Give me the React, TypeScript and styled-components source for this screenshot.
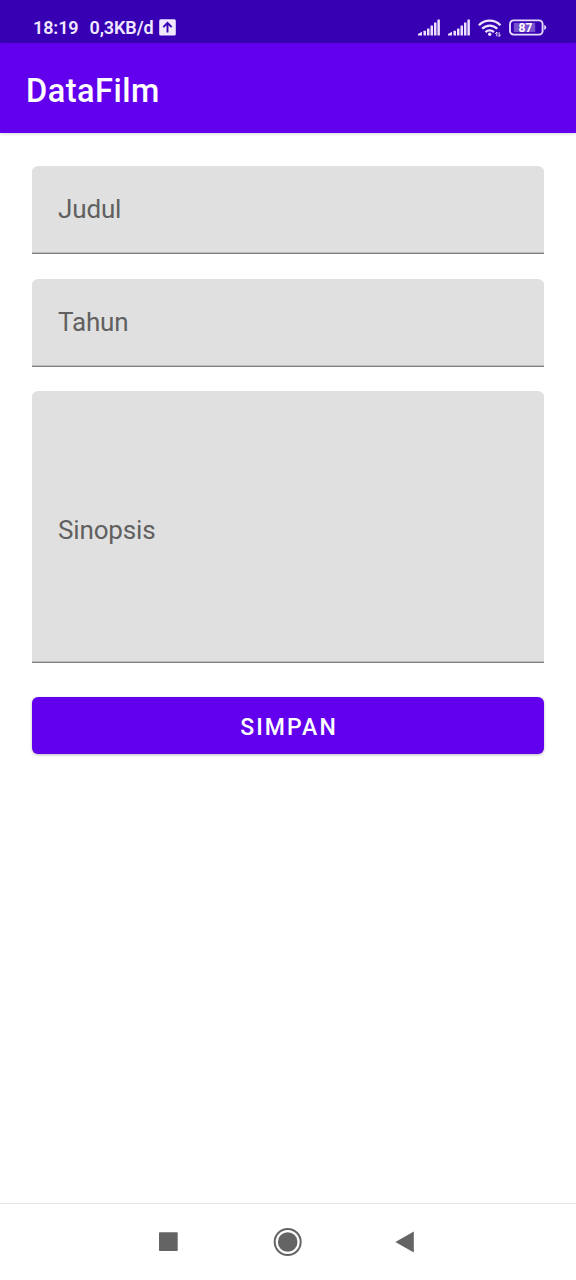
import React from "react";
import styled, { createGlobalStyle } from "styled-components";

const GlobalStyle = createGlobalStyle`
  * { box-sizing: border-box; }
  body { margin: 0; background: #fff; font-family: Roboto, "Liberation Sans", sans-serif; }
`;

const Screen = styled.div`
  display: flex;
  flex-direction: column;
  width: 576px;
  height: 1280px;
  overflow: hidden;
  background: #fff;
`;

const StatusBar = styled.header`
  display: flex;
  align-items: center;
  justify-content: space-between;
  height: 43px;
  flex: none;
  padding: 12px 29px 0 33px;
  background: #3700b3;
  color: #f0e8ff;
`;

const StatusGroup = styled.div<{ $gap: number }>`
  display: flex;
  align-items: center;
  gap: ${(p) => p.$gap}px;
`;

const StatusText = styled.span<{ $after: number }>`
  margin-right: ${(p) => p.$after}px;
  font-size: 18px;
  font-weight: 600;
  line-height: 20px;
  letter-spacing: -0.1px;
  white-space: nowrap;
`;

const AppBar = styled.div`
  display: flex;
  align-items: center;
  height: 90px;
  flex: none;
  padding: 6px 26px 0;
  background: #6200ee;
  box-shadow: 0 1px 3px rgba(0, 0, 0, 0.16);
`;

const Title = styled.h1`
  margin: 0;
  color: #fff;
  font-size: 32.5px;
  font-weight: 500;
  line-height: 40px;
  letter-spacing: 0.5px;
`;

const Form = styled.main`
  flex: 1;
  display: flex;
  flex-direction: column;
  padding: 33px 32px 0;
`;

const Field = styled.div<{ $height: number; $gap: number; $shift?: number }>`
  display: flex;
  align-items: flex-start;
  flex: none;
  height: ${(p) => p.$height}px;
  margin-bottom: ${(p) => p.$gap}px;
  padding: ${(p) => p.$shift ?? 27}px 26px 0;
  background: #e0e0e0;
  border-bottom: 1px solid #808080;
  border-radius: 6px 6px 0 0;
  box-shadow: inset 0 -1px 0 #bcbcbc;
`;

const Label = styled.span`
  color: #606060;
  font-size: 26px;
  line-height: 32px;
  letter-spacing: -0.15px;
`;

const SaveButton = styled.button`
  height: 57px;
  margin: 0;
  padding: 3px 0 0 2px;
  border: 0;
  border-radius: 6px;
  background: #6200ee;
  box-shadow: 0 1px 3px rgba(0, 0, 0, 0.28);
  color: #fff;
  font-family: inherit;
  font-size: 23px;
  font-weight: 500;
  letter-spacing: 2.1px;
`;

const NavBar = styled.nav`
  display: flex;
  align-items: center;
  height: 77px;
  flex: none;
  padding-left: 158px;
  border-top: 1px solid #e4e4e4;
`;

const NavIcon = styled.svg<{ $gap?: number }>`
  display: block;
  margin-left: ${(p) => p.$gap ?? 0}px;
  fill: #646464;
`;

const UploadIcon = () => (
  <svg width="17" height="17" viewBox="0 0 17 17">
    <rect x="0.2" y="0.2" width="16.6" height="16.4" rx="1.5" fill="#f0e8ff" />
    <path d="M8.5 13.4V4.2M4.3 8.2l4.2-4.3 4.2 4.3" fill="none" stroke="#3700b3" strokeWidth="1.9" />
  </svg>
);

const SignalIcon = () => (
  <svg width="23" height="17" viewBox="0 0 23 17" fill="#ebe1fd">
    <path d="M0 16.4V15l4-2.2v3.6z" />
    <rect x="5.5" y="11.8" width="2.5" height="4.6" rx="0.5" />
    <rect x="9" y="9.6" width="2.5" height="6.8" rx="0.5" />
    <rect x="12.5" y="6.6" width="2.5" height="9.8" rx="0.5" />
    <rect x="16" y="3.6" width="2.5" height="12.8" rx="0.5" />
    <rect x="19.4" y="0.4" width="2.5" height="16" rx="0.5" />
  </svg>
);

const WifiIcon = () => (
  <svg width="24" height="19" viewBox="0 0 24 19" fill="none" stroke="#ede4fe" strokeWidth="2.3">
    <path d="M0.9 7.3a15 15 0 0 1 21.6 0" />
    <path d="M4.2 10.8a10.4 10.4 0 0 1 15 0" />
    <path d="M7.5 14.1a6 6 0 0 1 8.4 0" />
    <circle cx="11.7" cy="16.2" r="1.7" fill="#ede4fe" stroke="none" />
    <path d="M18.9 18.4v-4.4l-1.6 2M21.1 14.2v4.4l1.6-2" strokeWidth="1" />
  </svg>
);

const BatteryIcon = () => (
  <svg width="38" height="17" viewBox="0 0 38 17">
    <rect x="1" y="1.4" width="32.6" height="14.2" rx="3.6" fill="none" stroke="#e6dbfb" strokeWidth="1.9" />
    <rect x="4.8" y="3.9" width="21.4" height="9.2" fill="#7650cd" />
    <path d="M35.2 6.1q2 .4 2 2.4t-2 2.4z" fill="#e6dbfb" />
    <text x="16.4" y="12.7" textAnchor="middle" fill="#fff" fontFamily="Roboto, sans-serif" fontSize="12" fontWeight="700">
      87
    </text>
  </svg>
);

export default function App() {
  return (
    <Screen>
      <GlobalStyle />
      <StatusBar>
        <StatusGroup $gap={0}>
          <StatusText $after={11}>18:19</StatusText>
          <StatusText $after={6}>0,3KB/d</StatusText>
          <UploadIcon />
        </StatusGroup>
        <StatusGroup $gap={7}>
          <SignalIcon />
          <SignalIcon />
          <WifiIcon />
          <BatteryIcon />
        </StatusGroup>
      </StatusBar>
      <AppBar>
        <Title>DataFilm</Title>
      </AppBar>
      <Form>
        <Field $height={88} $gap={25}>
          <Label>Judul</Label>
        </Field>
        <Field $height={88} $gap={24}>
          <Label>Tahun</Label>
        </Field>
        <Field $height={272} $gap={34} $shift={123}>
          <Label>Sinopsis</Label>
        </Field>
        <SaveButton type="button">SIMPAN</SaveButton>
      </Form>
      <NavBar>
        <NavIcon width="20" height="28" viewBox="0 0 20 28">
          <rect x="1" y="4.3" width="18.7" height="18.7" rx="0.8" />
        </NavIcon>
        <NavIcon $gap={95} width="30" height="30" viewBox="0 0 30 30">
          <circle cx="14.7" cy="15" r="13" fill="none" stroke="#646464" strokeWidth="2" />
          <circle cx="14.7" cy="15" r="9.8" />
        </NavIcon>
        <NavIcon $gap={92} width="20" height="28" viewBox="0 0 20 28">
          <path d="M.4 14 18.8 3.6v20.8z" />
        </NavIcon>
      </NavBar>
    </Screen>
  );
}
